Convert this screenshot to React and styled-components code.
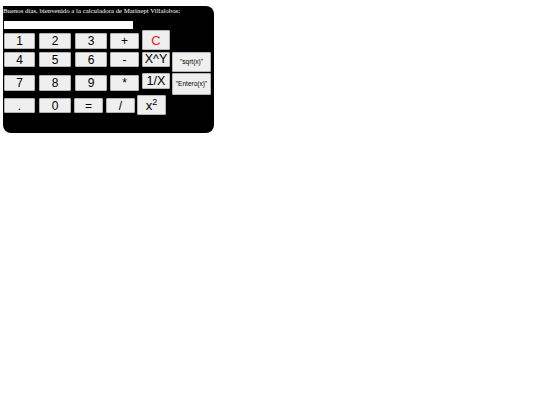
import React from 'react';
import styled, {createGlobalStyle} from 'styled-components';

const GlobalStyle = createGlobalStyle`
  body {
    margin: 0;
    background: #ffffff;
  }
`;

const Page = styled.div`
  padding: 6px 0 0 3px;
`;

const Calculator = styled.div`
  width: 211px;
  height: 127px;
  box-sizing: border-box;
  background: #000000;
  border-radius: 0 8px 8px 8px;
  display: flex;
  flex-direction: column;
`;

const Greeting = styled.div`
  color: #ffffff;
  font-family: "Liberation Serif", serif;
  font-size: 6.8px;
  line-height: 9px;
  white-space: nowrap;
`;

const Display = styled.input`
  display: block;
  width: 129px;
  height: 8px;
  margin: 6px 0 1px 1px;
  padding: 0;
  border: none;
  background: #ffffff;
  outline: none;
`;

const Row = styled.div`
  display: flex;
  align-items: flex-start;
  margin-left: 1px;
  margin-top: ${p => p.$mt || 0}px;
`;

const Key = styled.button`
  box-sizing: border-box;
  width: ${p => p.$w}px;
  height: ${p => p.$h || 16}px;
  margin-left: ${p => p.$ml || 0}px;
  margin-top: ${p => p.$mt || 0}px;
  padding: 0;
  background: #efefef;
  border: 1px solid #b4b4b4;
  border-radius: 1px;
  color: ${p => (p.$red ? '#e0201b' : '#000000')};
  font-family: "Liberation Sans", Arial, sans-serif;
  font-size: ${p => p.$fs || 12}px;
  line-height: 1;
  white-space: nowrap;
  display: flex;
  align-items: center;
  justify-content: center;

  sup {
    font-size: 9px;
    line-height: 0;
    position: relative;
    top: -3px;
  }
`;

export default function App() {
  return (
    <>
      <GlobalStyle />
      <Page>
        <Calculator>
          <Greeting>Buenos días, bienvenido a la calculadora de Marinept Villalobos:</Greeting>
          <Display type="text" />
          <Row $mt={0}>
            <Key $w={31} $mt={3}>1</Key>
            <Key $w={32} $ml={4} $mt={3}>2</Key>
            <Key $w={32} $ml={4} $mt={3}>3</Key>
            <Key $w={29} $ml={3} $mt={3}>+</Key>
            <Key $w={28} $ml={3} $h={20} $fs={13} $red>C</Key>
          </Row>
          <Row $mt={2}>
            <Key $w={31} $h={15}>4</Key>
            <Key $w={32} $ml={4} $h={15}>5</Key>
            <Key $w={32} $ml={4} $h={15}>6</Key>
            <Key $w={29} $ml={3} $h={15}>-</Key>
            <Key $w={28} $ml={3} $h={15} $fs={12.5}>X^Y</Key>
            <Key $w={39} $ml={2} $h={20} $fs={6.5}>"sqrt(x)"</Key>
          </Row>
          <Row $mt={1}>
            <Key $w={31} $mt={2}>7</Key>
            <Key $w={32} $ml={4} $mt={2}>8</Key>
            <Key $w={32} $ml={4} $mt={2}>9</Key>
            <Key $w={29} $ml={3} $mt={2}>*</Key>
            <Key $w={28} $ml={3} $fs={12.5}>1/X</Key>
            <Key $w={39} $ml={2} $h={22} $fs={6.5}>"Entero(x)"</Key>
          </Row>
          <Row $mt={0}>
            <Key $w={31} $mt={3} $h={15}>.</Key>
            <Key $w={32} $ml={4} $mt={3} $h={15}>0</Key>
            <Key $w={29} $ml={3} $mt={3} $h={15}>=</Key>
            <Key $w={29} $ml={3} $mt={3} $h={15}>/</Key>
            <Key $w={29} $ml={2} $h={20} $fs={13}>x<sup>2</sup></Key>
          </Row>
        </Calculator>
      </Page>
    </>
  );
}
